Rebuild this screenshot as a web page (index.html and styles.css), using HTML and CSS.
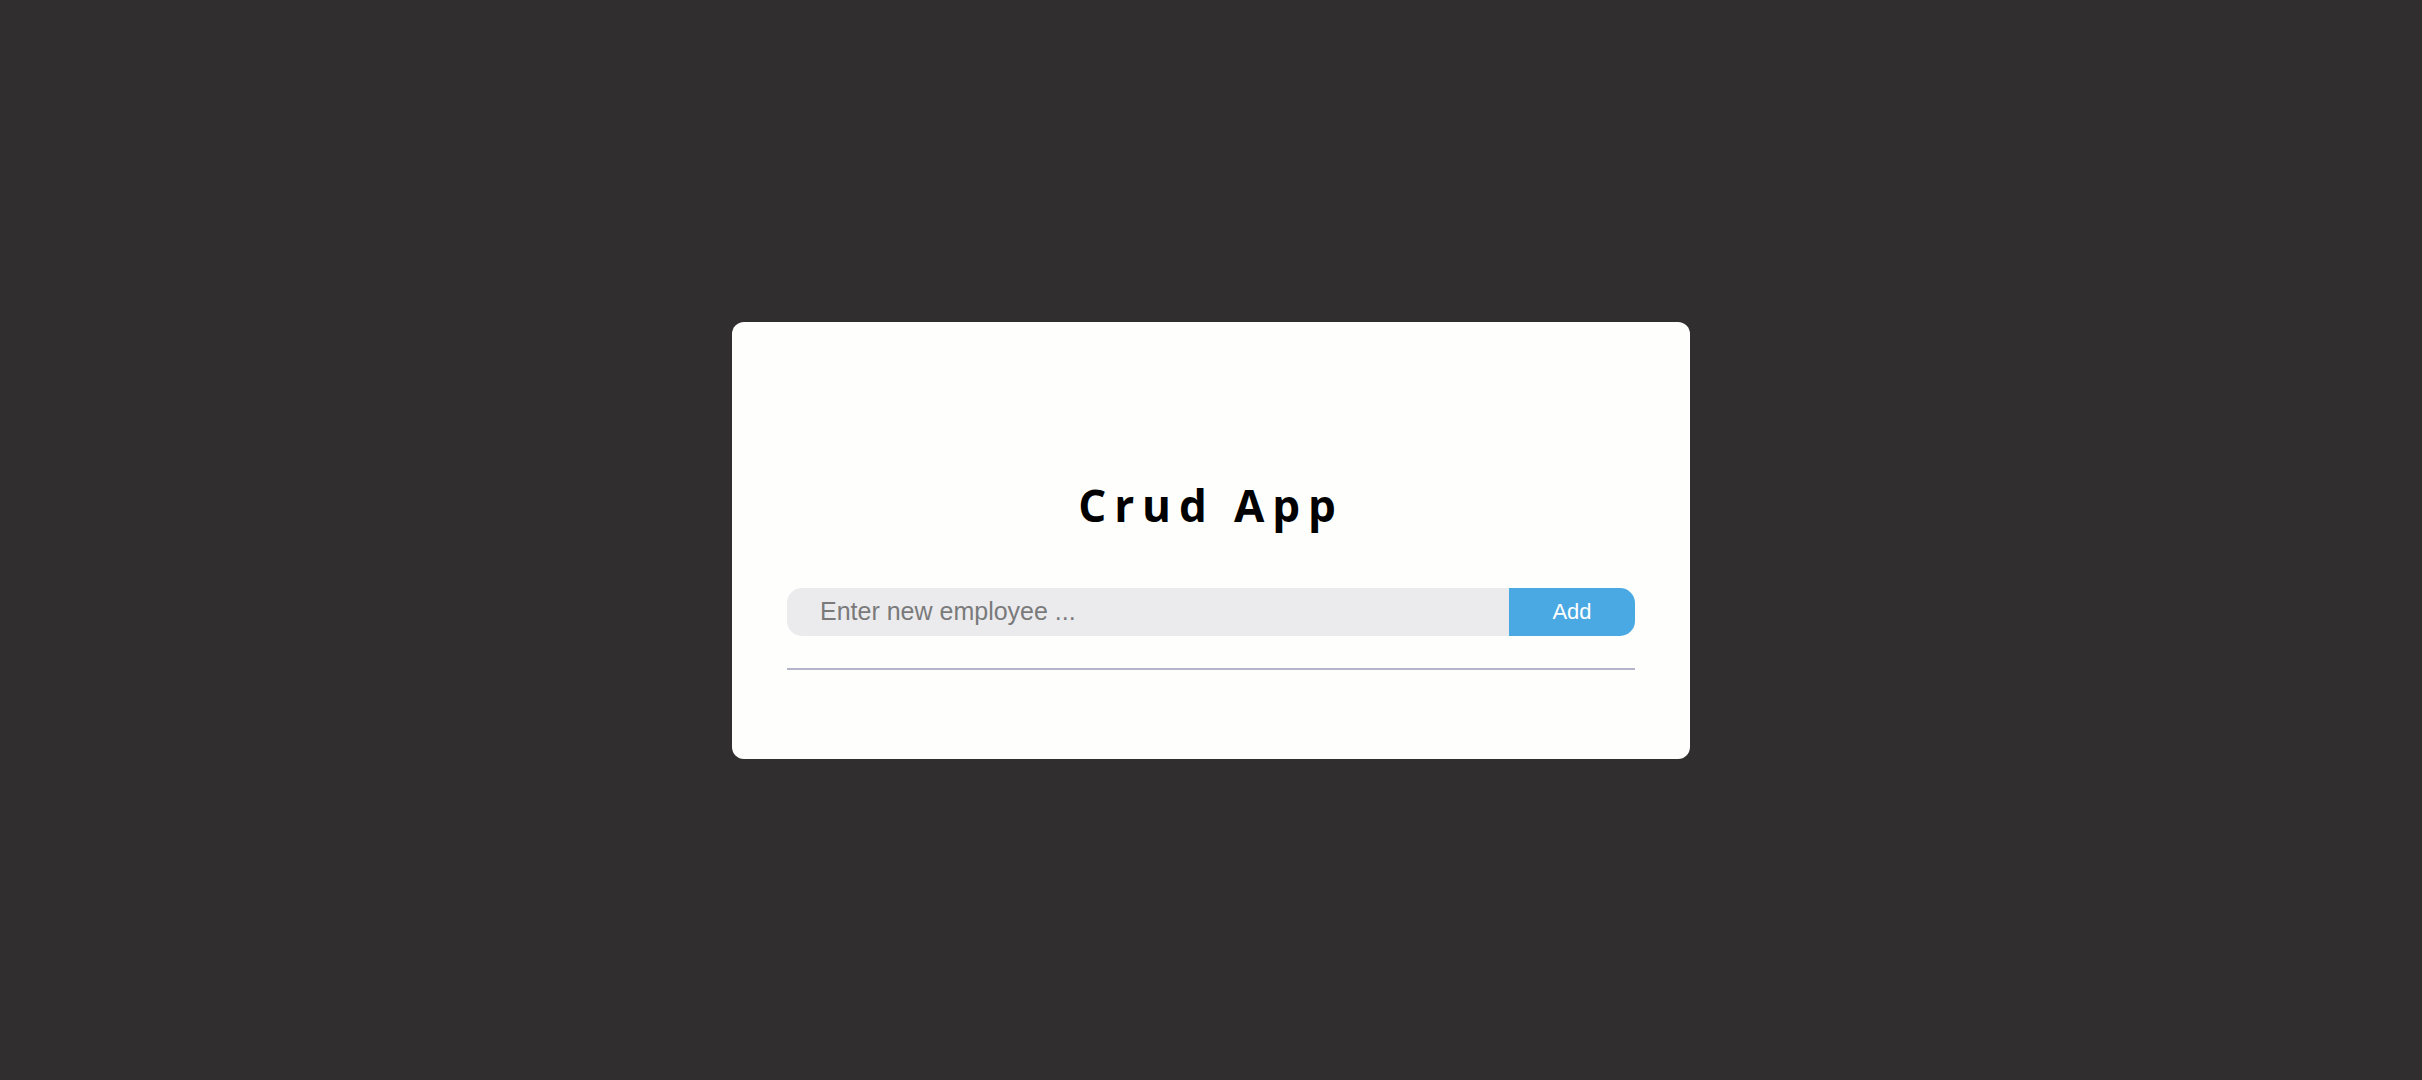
FILE: index.html
```html
<!DOCTYPE html>
<html lang="en">
<head>
<meta charset="utf-8">
<title>Crud App</title>
<link rel="stylesheet" href="styles.css">
</head>
<body>
  <main class="card">
    <h1 class="title">Crud App</h1>
    <form class="add-form" onsubmit="return false">
      <input class="add-input" type="text" placeholder="Enter new employee ...">
      <button class="add-btn" type="submit">Add</button>
    </form>
    <hr class="divider">
    <ul class="list"></ul>
  </main>
</body>
</html>
```

FILE: styles.css
```css
html, body {
  margin: 0;
  padding: 0;
  height: 100%;
}

body {
  background: #302e2e;
  display: flex;
  align-items: center;
  justify-content: center;
  font-family: "Liberation Sans", Arial, sans-serif;
}

.card {
  box-sizing: border-box;
  width: 958px;
  height: 437px;
  background: #fefefc;
  border-radius: 12px;
  padding: 153px 55px 0;
  display: flex;
  flex-direction: column;
}

.title {
  margin: 0;
  font-family: "Open Sans", sans-serif;
  font-weight: 700;
  font-size: 44px;
  line-height: 60px;
  letter-spacing: 0.18em;
  text-align: center;
  color: #000;
}

.add-form {
  margin: 53px 0 0;
  display: flex;
  height: 48px;
}

.add-input {
  flex: 1;
  min-width: 0;
  box-sizing: border-box;
  height: 48px;
  border: none;
  outline: none;
  background: #ebebee;
  border-radius: 15px 0 0 15px;
  padding: 0 0 0 33px;
  font-family: "Liberation Sans", Arial, sans-serif;
  font-size: 25px;
  color: #333;
}

.add-input::placeholder {
  color: #7a7a7a;
}

.add-btn {
  width: 126px;
  height: 48px;
  border: none;
  background: #4aa8e2;
  color: #fff;
  border-radius: 0 15px 15px 0;
  font-family: "Liberation Sans", Arial, sans-serif;
  font-size: 22px;
  cursor: pointer;
  padding: 0;
}

.divider {
  margin: 32px 0 0;
  border: none;
  height: 2px;
  background: #b4b4c8;
}

.list {
  margin: 0;
  padding: 0;
  list-style: none;
}
```
